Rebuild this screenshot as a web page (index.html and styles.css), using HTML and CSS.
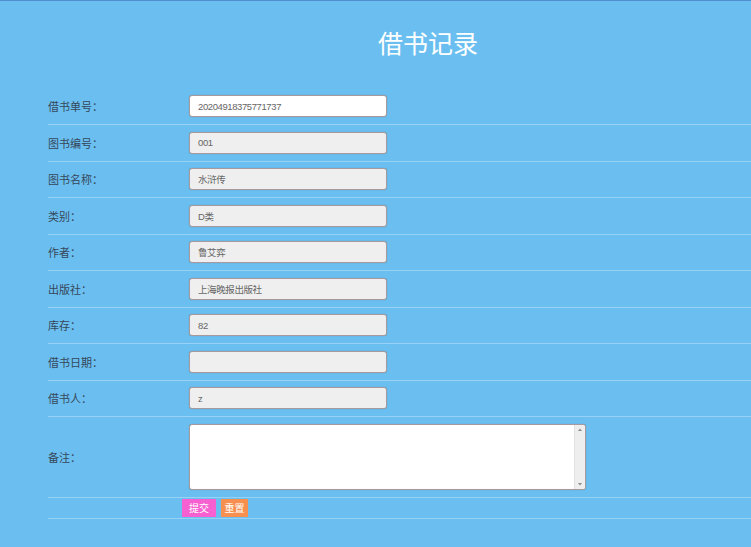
FILE: index.html
```html
<!DOCTYPE html>
<html lang="zh-CN">
<head>
<meta charset="utf-8">
<title>借书记录</title>
<link rel="stylesheet" href="styles.css">
</head>
<body>
<div class="page">
  <h1 class="title">借书记录</h1>
  <form class="form">
    <div class="row"><label class="lbl">借书单号：</label><input class="field white" value="20204918375771737"></div>
    <div class="row"><label class="lbl">图书编号：</label><input class="field" value="001" readonly></div>
    <div class="row"><label class="lbl">图书名称：</label><input class="field" value="水浒传" readonly></div>
    <div class="row"><label class="lbl">类别：</label><input class="field" value="D类" readonly></div>
    <div class="row"><label class="lbl">作者：</label><input class="field" value="鲁艾弈" readonly></div>
    <div class="row"><label class="lbl">出版社：</label><input class="field" value="上海晚报出版社" readonly></div>
    <div class="row"><label class="lbl">库存：</label><input class="field" value="82" readonly></div>
    <div class="row"><label class="lbl">借书日期：</label><input class="field" value="" readonly></div>
    <div class="row"><label class="lbl">借书人：</label><input class="field" value="z" readonly></div>
    <div class="row row-area">
      <label class="lbl">备注：</label>
      <div class="area-box">
        <textarea class="area"></textarea>
        <div class="sbar">
          <svg class="arr" width="10" height="10" viewBox="0 0 10 10"><path d="M3 6 L5 3.5 L7 6 Z" fill="#8a8a8a"/></svg>
          <svg class="arr" width="10" height="10" viewBox="0 0 10 10"><path d="M3 4 L5 6.5 L7 4 Z" fill="#8a8a8a"/></svg>
        </div>
      </div>
    </div>
    <div class="row row-btn"><span class="lbl"></span><button type="button" class="btn submit">提交</button><button type="button" class="btn reset">重置</button></div>
  </form>
</div>
</body>
</html>
```
FILE: styles.css
```css
html, body {
  margin: 0;
  padding: 0;
}
body {
  background: #6bbff0;
  border-top: 1px solid #4f8fd0;
  font-family: "Noto Sans CJK SC", "Noto Sans", sans-serif;
  height: 546px;
  overflow: hidden;
}
.page {
  padding-left: 48px;
}
.title {
  margin: 0;
  height: 87.5px;
  box-sizing: border-box;
  padding: 24px 0 0 330px;
  font-size: 25px;
  font-weight: 400;
  line-height: 34px;
  color: #ffffff;
}
.form {
  display: flex;
  flex-direction: column;
}
.row {
  display: flex;
  align-items: center;
  padding: 6.75px 0;
  border-bottom: 1px solid rgba(170, 218, 246, 0.7);
}
.lbl {
  width: 141px;
  flex: none;
  font-size: 11px;
  color: #35475a;
}
.field {
  width: 198px;
  height: 22px;
  box-sizing: border-box;
  border: 1px solid #a89a9c;
  border-radius: 3px;
  background: #efefef;
  padding: 0 8px;
  font-family: "Liberation Sans", "Noto Sans CJK SC", sans-serif;
  font-size: 9.5px;
  letter-spacing: -0.4px;
  color: #666;
  outline: none;
  box-shadow: 0 0 1px rgba(0,0,0,0.3);
}
.field.white {
  background: #ffffff;
}
.row-area {
  padding: 7px 0 7px;
}
.area-box {
  display: flex;
  width: 397px;
  height: 66px;
  box-sizing: border-box;
  border: 1px solid #a89a9c;
  border-radius: 3px;
  background: #ffffff;
  overflow: hidden;
  box-shadow: 0 0 1px rgba(0,0,0,0.3);
}
.area {
  flex: 1;
  border: none;
  background: transparent;
  resize: none;
  margin: 0;
  padding: 2px;
  outline: none;
  overflow: hidden;
}
.sbar {
  width: 10px;
  flex: none;
  background: #eeeeee;
  border-left: 1px solid #e2e2e2;
  display: flex;
  flex-direction: column;
  justify-content: space-between;
}
.arr {
  display: block;
}
.row-btn {
  padding: 1px 0 0;
  align-items: flex-start;
  height: 19px;
  box-sizing: content-box;
}
.row-btn .lbl {
  width: 134px;
}
.btn {
  height: 18px;
  border: none;
  margin: 0 5px 0 0;
  padding: 0 6px;
  font-family: "Noto Sans CJK SC", sans-serif;
  font-size: 10px;
  line-height: 18px;
  color: #ffffff;
}
.submit {
  width: 34px;
  background: #f760d0;
}
.reset {
  width: 27px;
  padding: 0 3px;
  background: #f7904e;
}
```
